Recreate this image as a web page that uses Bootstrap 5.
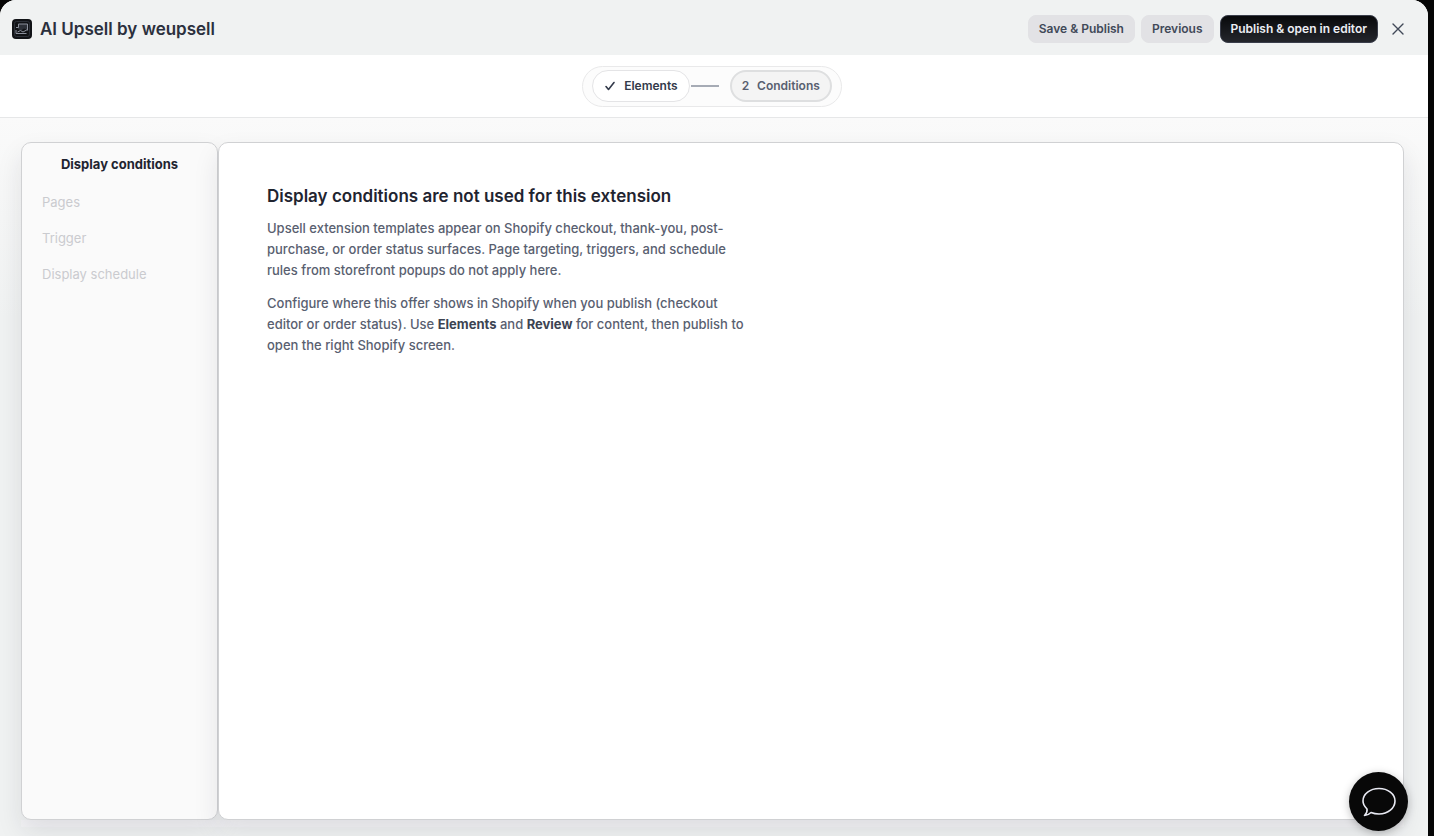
<!DOCTYPE html>
<html lang="en">
<head>
<meta charset="utf-8">
<meta name="viewport" content="width=device-width, initial-scale=1">
<title>AI Upsell by weupsell</title>
<link href="https://cdn.jsdelivr.net/npm/bootstrap@5.3.0/dist/css/bootstrap.min.css" rel="stylesheet">
<style>
  body { font-family: Inter, "Liberation Sans", sans-serif; font-size: 13px; background: #050505; color: #1f2430; }
  .app-shell { margin-right: 6px; background: #fafafa; border-radius: 16px 16px 0 0; overflow: hidden; }
  .app-header { height: 55px; padding: 2px 24px 0 12px; background: #f0f2f2; }
  .app-title { font-size: 17px; font-weight: 600; line-height: 24px; color: #2b303d; }
  .header-actions { gap: 6px; }
  .btn-app { --bs-btn-font-size: 12px; --bs-btn-font-weight: 600; --bs-btn-line-height: 18px; --bs-btn-padding-x: 10px; --bs-btn-padding-y: 4px; --bs-btn-border-radius: 8px; }
  .btn-soft { --bs-btn-color: #414958; --bs-btn-bg: #e2e2e5; --bs-btn-border-color: #e2e2e5; --bs-btn-hover-bg: #d6d6da; }
  .btn-ink { --bs-btn-color: #eceef4; --bs-btn-bg: #15161a; --bs-btn-border-color: #3a3e4b; --bs-btn-hover-color: #fff; --bs-btn-hover-bg: #2a2c33; background-image: linear-gradient(#08090b, #24262c); }
  .btn-plain { --bs-btn-padding-x: 0; --bs-btn-padding-y: 0; --bs-btn-border-width: 0; color: #414958; margin-left: 8px; }
  .step-bar { height: 63px; background: #fff; border-bottom: 1px solid #e6e7e8; }
  .step-track { height: 41px; padding: 0 9px; border: 1px solid #e9e9ea; background: #fcfcfc; margin-right: 4px; }
  .step-pill { --bs-btn-font-size: 12px; --bs-btn-font-weight: 600; --bs-btn-line-height: 18px; --bs-btn-padding-y: 6px; --bs-btn-padding-x: 11px; --bs-btn-border-radius: 16px; --bs-btn-color: #333a4a; --bs-btn-bg: #fff; --bs-btn-border-color: #e4e4e6; }
  .step-current { --bs-btn-color: #596070; --bs-btn-bg: #f4f4f4; --bs-btn-border-color: #dedfe0; --bs-btn-border-width: 2px; --bs-btn-padding-y: 5px; --bs-btn-padding-x: 10px; }
  .step-line { width: 28px; height: 2px; margin: 0 11px 0 1px; background: #a6abb5; }
  .workspace { padding: 24px 24px 16px 21px; background: linear-gradient(#fafafa, #f0f2f2 200px, #f0f2f2); }
  .panels { box-shadow: 0 7px 0 #f4f4f6; border-radius: 10px 10px 0 0; }
  .panel-box { border: 1px solid #d0d1d3; border-radius: 10px; box-shadow: 0 12px 26px rgba(30, 34, 50, .1); }
  .side-panel { width: 197px; padding: 11px 20px; background: #fafafa; }
  .side-title { font-size: 13px; line-height: 20px; font-weight: 700; margin-bottom: 18px; }
  .side-link { line-height: 20px; color: #cacbcf; text-decoration: none; }
  .side-link:hover { color: #4b5260; }
  .main-panel { padding: 41px 48px; background: #fff; }
  .main-title { font-size: 17px; line-height: 24px; font-weight: 600; margin-bottom: 10px; }
  .main-copy { max-width: 490px; font-weight: 500; line-height: 21px; color: #596070; }
  .main-copy p { margin-bottom: 12px; }
  .main-copy strong { font-weight: 700; color: #3c4352; }
  .chat-button { right: 26px; bottom: 5px; width: 59px; height: 59px; background: #080808; color: #e8e9f2; box-shadow: 0 2px 8px rgba(0, 0, 0, .25); z-index: 10; }
</style>
</head>
<body>
<div class="app-shell d-flex flex-column min-vh-100">
  <header class="app-header d-flex align-items-center justify-content-between">
    <div class="d-flex align-items-center gap-2">
      <svg width="20" height="20" viewBox="0 0 20 20" fill="none" aria-hidden="true"><rect width="20" height="20" rx="4" fill="#111317"/><rect x="2.500" y="2.500" width="15" height="15" rx="2" stroke="#2c3038"/><path d="M6 5H15.500V11L12 9.500 9 11.500 6 10Z" fill="#2c3038"/><path d="M4 8.500H6.500V5H15.500V11.500M4 11V14.500H14.500M5.500 13 8.500 11.500 11 13 15.500 10.500" stroke="#8b909c"/></svg>
      <h1 class="app-title mb-0">AI Upsell by weupsell</h1>
    </div>
    <div class="header-actions d-flex align-items-center">
      <button type="button" class="btn btn-app btn-soft">Save &amp; Publish</button>
      <button type="button" class="btn btn-app btn-soft">Previous</button>
      <button type="button" class="btn btn-app btn-ink">Publish &amp; open in editor</button>
      <button type="button" class="btn btn-plain d-flex" aria-label="Close"><svg width="12" height="12" viewBox="0 0 12 12" stroke="currentColor" stroke-width="1.400" stroke-linecap="round"><path d="M1 1 11 11M11 1 1 11"/></svg></button>
    </div>
  </header>
  <nav class="step-bar d-flex align-items-center justify-content-center" aria-label="Steps">
    <div class="step-track rounded-pill d-flex align-items-center">
      <button type="button" class="btn step-pill d-flex align-items-center"><svg class="me-2" width="12" height="12" viewBox="0 0 12 12" fill="none" stroke="currentColor" stroke-width="1.600" stroke-linecap="round" stroke-linejoin="round" aria-hidden="true"><path d="M2 6.500 4.500 9.500 10 2.500"/></svg>Elements</button>
      <span class="step-line"></span>
      <button type="button" class="btn step-pill step-current" aria-current="step"><span class="me-2">2</span>Conditions</button>
    </div>
  </nav>
  <main class="workspace d-flex flex-column flex-grow-1">
    <div class="panels d-flex flex-grow-1">
      <aside class="side-panel panel-box flex-shrink-0">
        <h2 class="side-title text-center">Display conditions</h2>
        <nav class="d-flex flex-column gap-3" aria-label="Display conditions">
          <a class="side-link" href="#pages">Pages</a>
          <a class="side-link" href="#trigger">Trigger</a>
          <a class="side-link" href="#schedule">Display schedule</a>
        </nav>
      </aside>
      <section class="main-panel panel-box flex-grow-1">
        <h2 class="main-title">Display conditions are not used for this extension</h2>
        <div class="main-copy">
          <p>Upsell extension templates appear on Shopify checkout, thank-you, post-purchase, or order status surfaces. Page targeting, triggers, and schedule rules from storefront popups do not apply here.</p>
          <p>Configure where this offer shows in Shopify when you publish (checkout editor or order status). Use <strong>Elements</strong> and <strong>Review</strong> for content, then publish to open the right Shopify screen.</p>
        </div>
      </section>
    </div>
  </main>
</div>
<button type="button" class="chat-button btn position-fixed rounded-circle p-0 border-0 d-flex align-items-center justify-content-center" aria-label="Open chat">
  <svg width="34" height="30" viewBox="0 0 34 30" fill="none" stroke="currentColor" stroke-width="1.600" stroke-linejoin="round"><path d="M5 22C2.500 19.500 1 17 1 14 1 7 8 1.500 17 1.500S33 7 33 14 26 27 17 27C14 27 11.500 26.500 9 25.500 7 27.500 5 28.500 2.500 28.500 4.500 26.500 5.500 24.500 5 22Z"/></svg>
</button>
<script src="https://cdn.jsdelivr.net/npm/bootstrap@5.3.0/dist/js/bootstrap.bundle.min.js"></script>
</body>
</html>
